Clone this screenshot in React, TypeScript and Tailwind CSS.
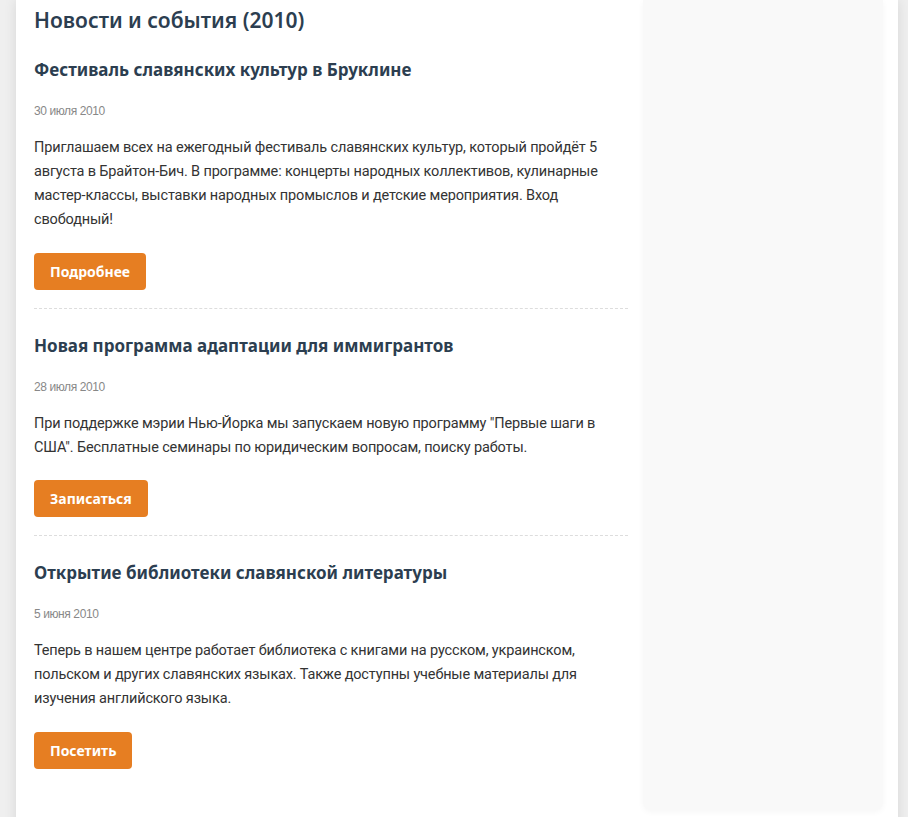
import React from "react";

type Item = { title: string; date: string; text: string; button: string };

const items: Item[] = [
  {
    title: "Фестиваль славянских культур в Бруклине",
    date: "30 июля 2010",
    text:
      "Приглашаем всех на ежегодный фестиваль славянских культур, который пройдёт 5 августа в Брайтон-Бич. В программе: концерты народных коллективов, кулинарные мастер-классы, выставки народных промыслов и детские мероприятия. Вход свободный!",
    button: "Подробнее",
  },
  {
    title: "Новая программа адаптации для иммигрантов",
    date: "28 июля 2010",
    text:
      'При поддержке мэрии Нью-Йорка мы запускаем новую программу "Первые шаги в США". Бесплатные семинары по юридическим вопросам, поиску работы.',
    button: "Записаться",
  },
  {
    title: "Открытие библиотеки славянской литературы",
    date: "5 июня 2010",
    text:
      "Теперь в нашем центре работает библиотека с книгами на русском, украинском, польском и других славянских языках. Также доступны учебные материалы для изучения английского языка.",
    button: "Посетить",
  },
];

export default function App() {
  return (
    <div className="min-h-[817px] bg-[#efefef] overflow-hidden">
      <div className="ml-4 w-[882px] min-h-[817px] bg-white shadow-[0_0_12px_rgba(0,0,0,0.10)] flex gap-[15px] pl-[18px] pr-[15px] pb-5">
        <main className="w-[594px] pt-1 font-['Roboto',sans-serif]">
          <h1 className="text-[21px] leading-[32px] font-semibold text-[#2c3e50] mb-[22px] font-['Noto_Sans',sans-serif]">
            Новости и события (2010)
          </h1>
          {items.map((it, i) => (
            <article
              key={i}
              className={
                (i > 0 ? "pt-[25px] " : "") +
                (i < items.length - 1 ? "pb-[18px] border-b border-dashed border-[#dddddd]" : "")
              }
            >
              <h2 className="text-[17px] leading-[24px] font-bold text-[#2c3e50] mb-[21px] font-['Noto_Sans',sans-serif]">
                {it.title}
              </h2>
              <div className="text-[12px] leading-[16px] tracking-[-0.4px] text-[#888888] mb-[17px] font-['Liberation_Sans',sans-serif]">
                {it.date}
              </div>
              <p className="text-[14.5px] leading-[24px] tracking-[-0.15px] text-[#333333] mb-[20.5px]">{it.text}</p>
              <button className="h-[37px] px-4 rounded bg-[#e67e22] text-white text-[14px] font-bold font-['Noto_Sans',sans-serif]">
                {it.button}
              </button>
            </article>
          ))}
        </main>
        <aside className="w-[240px] h-[810px] bg-[#f9f9f9] rounded-b-lg shadow-[0_2px_6px_rgba(0,0,0,0.04)]" />
      </div>
    </div>
  );
}
